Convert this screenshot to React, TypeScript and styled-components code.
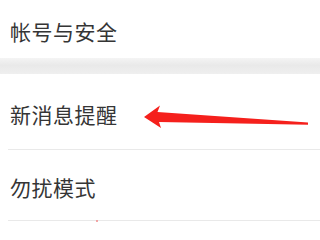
import React from 'react';
import styled, {createGlobalStyle} from 'styled-components';

const GlobalStyle = createGlobalStyle`
  body {
    margin: 0;
    background: #ffffff;
    font-family: "Noto Sans CJK SC", "Noto Sans", sans-serif;
  }
`;

const items = [
    {label: '新消息提醒', height: 76},
    {label: '勿扰模式', height: 71},
    {label: '', height: 30},
];

const App: React.FC = () => {
    return (
        <Page>
            <GlobalStyle />
            <Group>
                <Row $height={58} $noLine>
                    <Label>帐号与安全</Label>
                </Row>
            </Group>
            <GapBand />
            <Group>
                {items.map((item, i) => (
                    <Row key={i} $height={item.height}>
                        <Label>{item.label}</Label>
                    </Row>
                ))}
            </Group>
            <Arrow viewBox="0 0 320 240" width="320" height="240">
                <polygon
                    points="144,117 160,105.5 157.5,112 308,122.5 308,124.8 159,122 161,128"
                    fill="#f5201c"
                />
            </Arrow>
            <Speck />
        </Page>
    );
};

export default App;

const Page = styled.div`
  position: relative;
  width: 320px;
  height: 240px;
  overflow: hidden;
  display: flex;
  flex-direction: column;
  background: #ffffff;
`;

const Group = styled.div`
  display: flex;
  flex-direction: column;
  background: #ffffff;
`;

const Row = styled.div<{ $height: number; $noLine?: boolean }>`
  position: relative;
  flex-shrink: 0;
  height: ${p => p.$height}px;
  box-sizing: border-box;
  display: flex;
  align-items: center;
  padding: 3px 0 0 10px;

  &::after {
    content: '';
    display: ${p => (p.$noLine ? 'none' : 'block')};
    position: absolute;
    left: 8px;
    right: 0;
    bottom: 0;
    height: 1px;
    background: #e9e9e9;
  }
`;

const Label = styled.span`
  font-size: 21px;
  color: #353535;
  letter-spacing: 0.5px;
`;

const GapBand = styled.div`
  flex-shrink: 0;
  height: 16px;
  background: linear-gradient(#f4f4f4, #e9e9e9 45%, #efefef);
`;

const Arrow = styled.svg`
  position: absolute;
  left: 0;
  top: 0;
  pointer-events: none;
`;

const Speck = styled.div`
  position: absolute;
  left: 96px;
  top: 220px;
  width: 2px;
  height: 2px;
  border-radius: 50%;
  background: #f08a8a;
`;
